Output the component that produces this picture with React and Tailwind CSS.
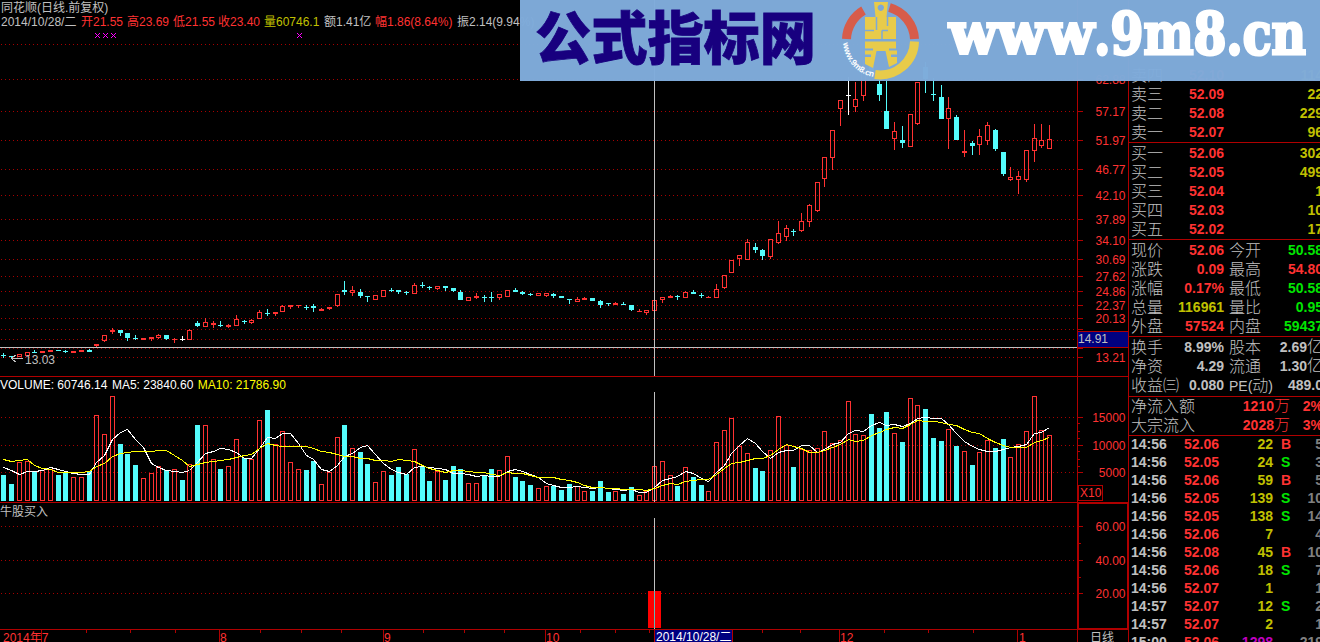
const RED = '#ff3232';
const CYAN = '#54fcfc';
const LINE = '#b00000';
const GRAY = '#c0c0c0';
const FONT = '"Liberation Sans", "Noto Sans CJK SC", sans-serif';

// kind, body top, body bottom, high, low
const candles = [
    ['c', 355, 356, 353, 358], ['c', 356, 357, 356, 358], ['r', 354, 357], ['r', 352, 356], ['c', 352, 353, 350, 353],
    ['r', 351, 353], ['r', 350, 352], ['c', 350, 351], ['c', 351, 352, 350, 353], ['r', 351, 353],
    ['r', 350, 352], ['c', 350, 352, 349, 352], ['r', 344, 346, 344, 347], ['r', 335, 341, 335, 342], ['r', 330, 332, 328, 334],
    ['c', 330, 333, 330, 336], ['c', 333, 338, 333, 341], ['c', 338, 339, 335, 340], ['r', 338, 340], ['r', 337, 339, 337, 341],
    ['r', 335, 338, 334, 339], ['c', 335, 339, 335, 340], ['r', 339, 340, 338, 343], ['w', 339, 340, 336, 341], ['r', 330, 340, 329, 340],
    ['c', 323, 326, 321, 327], ['r', 322, 327, 318, 327], ['r', 323, 325, 321, 328], ['c', 325, 326, 321, 327], ['r', 325, 327, 324, 328],
    ['r', 319, 326, 315, 326], ['c', 321, 322, 320, 324], ['r', 320, 323, 319, 324], ['r', 312, 319, 310, 319], ['c', 313, 314, 309, 316],
    ['r', 312, 314, 312, 316], ['r', 306, 312, 305, 312], ['r', 305, 307, 305, 309], ['r', 305, 306, 305, 308], ['c', 307, 308, 305, 310],
    ['c', 306, 308, 304, 312], ['r', 309, 311, 308, 311], ['r', 307, 309, 307, 310], ['r', 294, 306, 294, 307], ['c', 290, 292, 281, 295],
    ['r', 290, 293, 286, 296], ['c', 292, 296, 289, 298], ['c', 296, 297, 296, 302], ['r', 295, 300], ['r', 290, 297],
    ['c', 290, 291, 288, 292], ['c', 290, 292, 290, 294], ['c', 292, 293, 291, 295], ['r', 285, 294, 283, 294], ['c', 285, 286, 282, 288],
    ['c', 287, 288, 286, 290], ['r', 286, 289, 286, 290], ['c', 286, 288, 286, 291], ['c', 288, 291, 288, 292], ['c', 292, 300, 290, 300],
    ['r', 297, 301], ['r', 296, 298, 293, 299], ['c', 297, 298, 295, 302], ['c', 297, 298, 292, 302], ['r', 294, 298, 294, 300],
    ['r', 290, 297], ['c', 290, 292, 288, 292], ['c', 292, 294, 291, 295], ['c', 294, 295, 293, 296], ['r', 293, 296],
    ['r', 293, 296, 293, 297], ['c', 294, 296, 293, 298], ['c', 296, 298], ['c', 299, 300, 299, 304], ['r', 299, 302, 297, 302],
    ['r', 298, 300, 297, 300], ['c', 298, 301], ['c', 301, 305, 300, 308], ['c', 303, 304, 303, 306], ['r', 303, 305, 302, 305],
    ['c', 304, 305, 302, 305], ['c', 305, 310, 305, 311], ['r', 311, 312, 309, 312], ['r', 310, 313, 310, 315], ['r', 300, 311],
    ['r', 297, 300, 297, 303], ['r', 296, 298, 295, 298], ['c', 296, 297, 295, 300], ['r', 292, 298, 291, 298], ['c', 292, 294, 290, 294],
    ['c', 295, 296, 293, 298], ['r', 297, 298, 296, 298], ['r', 289, 298, 284, 298], ['r', 275, 288, 275, 289], ['r', 260, 273],
    ['r', 255, 259, 255, 266], ['r', 242, 260, 239, 260], ['c', 247, 250, 243, 253], ['c', 250, 256, 249, 260], ['r', 239, 257, 239, 259],
    ['r', 233, 243, 221, 244], ['r', 228, 237, 225, 241], ['c', 231, 232, 229, 236], ['r', 221, 231, 213, 232], ['r', 205, 222, 204, 227],
    ['r', 182, 211, 182, 212], ['r', 157, 179, 157, 187], ['r', 130, 158, 130, 170], ['r', 100, 109, 100, 126], ['w', 95, 96, 77, 115],
    ['r', 99, 107, 82, 112], ['r', 70, 96, 60, 101], ['c', 58, 74, 50, 78], ['c', 84, 95, 74, 101], ['c', 111, 129, 76, 129],
    ['r', 131, 139, 122, 150], ['c', 140, 143, 126, 148], ['r', 114, 147], ['r', 82, 124, 82, 125], ['c', 67, 79, 62, 93],
    ['c', 94, 95, 78, 101], ['c', 97, 119, 85, 119], ['r', 108, 119, 97, 149], ['c', 117, 140, 115, 140], ['r', 151, 153, 130, 157],
    ['c', 143, 146, 141, 155], ['r', 136, 145, 129, 155], ['r', 125, 141, 122, 145], ['c', 130, 149, 129, 151], ['c', 152, 174, 152, 176],
    ['r', 177, 180, 167, 181], ['r', 176, 180, 171, 194], ['r', 150, 180, 150, 182], ['r', 138, 151, 124, 162], ['r', 140, 146, 124, 148],
    ['r', 139, 149, 125, 149],
];

const volumeTops = [
    475, 484, 462, 461, 471, 470, 469, 475, 472, 477, 477, 471, 415, 434, 396, 444, 454, 465, 478, 473,
    466, 470, 469, 480, 464, 425, 425, 459, 469, 466, 439, 458, 459, 420, 410, 444, 431, 462, 469, 470,
    461, 484, 472, 437, 425, 448, 452, 464, 482, 471, 475, 467, 474, 449, 466, 481, 471, 480, 466, 469,
    483, 483, 475, 469, 470, 456, 477, 481, 485, 488, 486, 486, 490, 484, 486, 491, 491, 481, 492, 491,
    494, 487, 495, 491, 466, 461, 475, 486, 467, 477, 485, 491, 442, 430, 418, 446, 453, 468, 471, 450,
    416, 445, 467, 449, 450, 448, 431, 443, 440, 401, 434, 435, 414, 428, 412, 433, 442, 398, 405, 409,
    438, 441, 429, 446, 451, 465, 452, 440, 448, 439, 457, 444, 431, 396, 430, 435,
];

const barX = (i) => Math.ceil(2.97 + 7.745 * i);

// a doji takes its volume colour from the previous close
const risingDojis = [109];
const isUp = (i) => candles[i][0] === 'r' || risingDojis.includes(i);

// the first points come before a full averaging window is on screen
const average = (size, lead) =>
    volumeTops
        .map((_, i) => {
            const part = volumeTops.slice(Math.max(0, i - size + 1), i + 1);
            const y = i < lead.length ? lead[i] : part.reduce((a, b) => a + b, 0) / size;
            return `${barX(i) + 0.5},${Math.round(y) + 0.5}`;
        })
        .join(' ');

const ma5 = average(5, [467, 470, 474, 471]);
const ma10 = average(10, [459, 461, 460, 459, 465, 468, 469, 472, 472]);

const priceLevels = [
    [44], [79, '62.88'], [111, '57.17'], [140, '51.97'], [169, '46.77'], [195, '42.10'], [219, '37.89'], [240, '34.10'],
    [259, '30.69'], [276, '27.62'], [291, '24.86'], [305, '22.37'], [318, '20.13'], [329], [339], [348], [357, '13.21'],
];

function Candle({ x, data }) {
    const [kind, top, bottom, high = top, low = bottom] = data;
    const color = kind === 'r' ? RED : kind === 'c' ? CYAN : '#ffffff';
    const hollow = kind === 'r' && bottom - top > 2;
    return (
        <g fill={color}>
            {high < top && <rect x={x} y={high} width="1" height={top - high} />}
            {low > bottom && <rect x={x} y={bottom} width="1" height={low - bottom} />}
            {hollow ? (
                <rect x={x - 1.5} y={top + 0.5} width="4" height={bottom - top - 1} fill="none" stroke={color} />
            ) : (
                <rect x={x - 2} y={top} width="5" height={bottom - top} />
            )}
        </g>
    );
}

function GridLines({ ys }) {
    return ys.map((y) => (
        <line key={y} x1="1" x2="1076" y1={y + 0.5} y2={y + 0.5} stroke="#a80000" strokeDasharray="1 3" />
    ));
}

function Ticks({ ys, size }) {
    return ys.map((y) => <rect key={y} x="1078" y={y} width={size} height="1" fill={LINE} />);
}

function AxisLabel({ y, children }) {
    return (
        <text x="1125.5" y={y + 5} textAnchor="end" fill={RED}>
            {children}
        </text>
    );
}

function Panel({ top, height, children }) {
    return (
        <svg
            width="1129"
            height={height}
            viewBox={`0 ${top} 1129 ${height}`}
            className="block shrink-0"
            shapeRendering="crispEdges"
            fontFamily={FONT}
            fontSize="12"
        >
            {children}
        </svg>
    );
}

function PricePanel() {
    return (
        <Panel top={0} height={377}>
            <GridLines ys={priceLevels.map(([y]) => y)} />
            <Ticks ys={priceLevels.map(([y]) => y)} size="5" />
            {priceLevels.map(([y, label]) => label && <AxisLabel key={y} y={y}>{label}</AxisLabel>)}
            {candles.map((c, i) => <Candle key={i} x={barX(i)} data={c} />)}
            {[97, 105, 113, 299].map((x) => (
                <path
                    key={x}
                    d={`M${x - 2} 33h1v1h1v1h1v-1h1v-1h1v1h-1v1h-1v1h1v1h1v1h-1v-1h-1v-1h-1v1h-1v1h-1v-1h1v-1h1v-1h-1v-1h-1z`}
                    fill="#ff00ff"
                />
            ))}
            <path d="M23 358.5H11.500M15.500 355L11.500 358.500L15.500 362" fill="none" stroke={GRAY} />
            <text x="25" y="364" fill={GRAY}>13.03</text>
            <rect x="0" y="347" width="1077" height="1" fill={GRAY} />
            <rect x="654" y="0" width="1" height="376" fill={GRAY} />
            <rect x="1077" y="0" width="1" height="377" fill={LINE} />
            <rect x="1128" y="0" width="1" height="377" fill={LINE} />
            <rect x="1078" y="331" width="50" height="17" fill={LINE} />
            <rect x="1078" y="332" width="50" height="15" fill="#000080" />
            <text x="1078" y="343" fill={GRAY}>14.91</text>
            <rect x="0" y="376" width="1129" height="1" fill={LINE} />
        </Panel>
    );
}

function VolumePanel() {
    return (
        <Panel top={377} height={126}>
            <GridLines ys={[417, 445, 472]} />
            <Ticks ys={[417, 445, 472]} size="5" />
            <Ticks ys={[423, 431, 438, 451, 459, 466]} size="2" />
            <AxisLabel y={417}>15000</AxisLabel>
            <AxisLabel y={445}>10000</AxisLabel>
            <AxisLabel y={472}>5000</AxisLabel>
            {volumeTops.map((top, i) =>
                isUp(i) ? (
                    <rect key={i} x={barX(i) - 1.5} y={top + 0.5} width="4" height={500 - top} fill="none" stroke={RED} />
                ) : (
                    <rect key={i} x={barX(i) - 2} y={top} width="5" height={501 - top} fill={CYAN} />
                )
            )}
            <rect x="654" y="392" width="1" height="110" fill={GRAY} />
            <polyline points={ma5} fill="none" stroke="#ffffff" />
            <polyline points={ma10} fill="none" stroke="#ffff00" />
            <rect x="1077" y="377" width="1" height="126" fill={LINE} />
            <rect x="1128" y="377" width="1" height="126" fill={LINE} />
            <rect x="1078.5" y="485.5" width="24" height="15" fill="none" stroke={LINE} />
            <text x="1080" y="497" fill={RED}>X10</text>
            <rect x="0" y="502" width="1129" height="1" fill={LINE} />
        </Panel>
    );
}

function SignalPanel() {
    return (
        <Panel top={503} height={127}>
            <GridLines ys={[526, 560, 593]} />
            <Ticks ys={[526, 560, 593]} size="5" />
            <Ticks ys={[543, 577]} size="3" />
            <AxisLabel y={526}>60.00</AxisLabel>
            <AxisLabel y={560}>40.00</AxisLabel>
            <AxisLabel y={593}>20.00</AxisLabel>
            <rect x="648" y="591" width="13" height="37" fill="#ff0000" />
            <rect x="654" y="518" width="1" height="111" fill={GRAY} />
            <rect x="654" y="591" width="1" height="37" fill="#60b8b8" />
            <rect x="0" y="629" width="1129" height="1" fill={LINE} />
            <rect x="1078" y="503" width="50" height="126" fill="none" stroke={LINE} strokeWidth="2" />
        </Panel>
    );
}

const months = [
    [41, '', 0],
    [219, '8', 220],
    [383, '9', 384],
    [545, '10', 546],
    [839, '12', 840],
    [1017, '1', 1019],
];

function DateAxis() {
    return (
        <Panel top={630} height={12}>
            {[86, 130, 175, 260, 301, 341, 423, 464, 504, 580, 615, 649, 762, 800, 884, 928, 973].map((x) => (
                <rect key={x} x={x} y="630" width="1" height="3" fill={LINE} />
            ))}
            {months.map(([x, label, tx]) => (
                <g key={x}>
                    <rect x={x} y="630" width="1" height="12" fill={LINE} />
                    <text x={tx} y="642" fill={RED}>{label}</text>
                </g>
            ))}
            <text x="3" y="642" fill={RED}>2014年7</text>
            <rect x="654" y="630" width="79" height="12" fill={LINE} />
            <rect x="655" y="630" width="77" height="12" fill="#000080" />
            <text x="656" y="641" fill="#ffffff">2014/10/28/二</text>
            <rect x="1077" y="630" width="1" height="12" fill={LINE} />
            <rect x="1128" y="630" width="1" height="12" fill={LINE} />
            <text x="1090" y="642" fill={GRAY}>日线</text>
        </Panel>
    );
}

function Legend() {
    return (
        <div className="absolute left-0 top-0 pt-px text-[12px] leading-[14px] whitespace-nowrap text-[#c0c0c0]">
            <div className="pl-[1px]">同花顺(日线.前复权)</div>
            <div className="flex pl-[1px] text-[#ff3232]">
                <span className="w-[80px] text-[#c0c0c0]">2014/10/28/二</span>
                <span className="w-[46px]">开21.55</span>
                <span className="w-[46px]">高23.69</span>
                <span className="w-[45px]">低21.55</span>
                <span className="w-[46px]">收23.40</span>
                <span className="w-[60px] text-[#c0c000]">量60746.1</span>
                <span className="w-[51px] text-[#c0c0c0]">额1.41亿</span>
                <span className="w-[82px]">幅1.86(8.64%)</span>
                <span className="text-[#c0c0c0]">振2.14(9.94%)</span>
            </div>
        </div>
    );
}

const R = 'text-[#ff3232]';
const G = 'text-[#00e600]';
const Y = 'text-[#c0c000]';
const W = 'text-[#c0c0c0]';

const asks = [
    ['卖四', '52.10', '114'],
    ['卖三', '52.09', '22'],
    ['卖二', '52.08', '229'],
    ['卖一', '52.07', '96'],
];
const bids = [
    ['买一', '52.06', '302'],
    ['买二', '52.05', '499'],
    ['买三', '52.04', '1'],
    ['买四', '52.03', '10'],
    ['买五', '52.02', '17'],
];
const stats = [
    ['现价', '52.06', R, '今开', '50.58', G],
    ['涨跌', '0.09', R, '最高', '54.80', R],
    ['涨幅', '0.17%', R, '最低', '50.58', G],
    ['总量', '116961', Y, '量比', '0.95', G],
    ['外盘', '57524', R, '内盘', '59437', G],
];
const trades = [
    ['14:56', '52.06', '22', 'B', '5'],
    ['14:56', '52.05', '24', 'S', '3'],
    ['14:56', '52.06', '59', 'B', '5'],
    ['14:56', '52.05', '139', 'S', '10'],
    ['14:56', '52.05', '138', 'S', '14'],
    ['14:56', '52.06', '7', '', '4'],
    ['14:56', '52.08', '45', 'B', '10'],
    ['14:56', '52.06', '18', 'S', '7'],
    ['14:56', '52.07', '1', '', '1'],
    ['14:57', '52.07', '12', 'S', '2'],
    ['14:57', '52.07', '2', '', '1'],
    ['15:00', '52.06', '1298', '', '219'],
];

function QuoteRow({ label, value, color, label2, value2, color2 }) {
    return (
        <div className="flex h-[19px] w-[194px] items-center pl-[2px] leading-[19px]">
            <span className="w-[44px] text-[16px] font-light">{label}</span>
            <span className={`w-[49px] text-right font-bold ${color}`}>{value}</span>
            <span className="ml-[5px] w-[32px] text-[16px] font-light">{label2}</span>
            <span className={`flex-1 text-right font-bold ${color2}`}>{value2}</span>
        </div>
    );
}

function Unit({ children }) {
    return <span className="text-[16px] leading-none font-light">{children}</span>;
}

function QuotePanel() {
    return (
        <aside className="w-[191px] overflow-hidden whitespace-nowrap text-[14px] text-[#c0c0c0]">
            <div className="flex h-[143px] flex-col justify-end border-b border-[#b00000]">
                {asks.map(([label, price, vol]) => (
                    <QuoteRow key={label} label={label} value={price} color={R} value2={vol} color2={Y} />
                ))}
            </div>
            <div className="h-[97px] border-b border-[#b00000] pt-px">
                {bids.map(([label, price, vol]) => (
                    <QuoteRow key={label} label={label} value={price} color={R} value2={vol} color2={Y} />
                ))}
            </div>
            <div className="h-[97px] border-b border-[#b00000] pt-px">
                {stats.map(([label, value, color, label2, value2, color2]) => (
                    <QuoteRow key={label} label={label} value={value} color={color} label2={label2} value2={value2} color2={color2} />
                ))}
            </div>
            <div className="h-[60px] border-b border-[#b00000] pt-px">
                <QuoteRow label="换手" value="8.99%" color={W} label2="股本" value2={<>2.69<Unit>亿</Unit></>} color2={W} />
                <QuoteRow label="净资" value="4.29" color={W} label2="流通" value2={<>1.30<Unit>亿</Unit></>} color2={W} />
                <QuoteRow
                    label="收益㈢"
                    value="0.080"
                    color={W}
                    label2={<><b className="text-[14px]">PE(</b>动<b className="text-[14px]">)</b></>}
                    value2="489.0"
                    color2={W}
                />
            </div>
            <div className="h-[39px] border-b border-[#b00000]">
                {[['净流入额', '1210', '2%'], ['大宗流入', '2028', '3%']].map(([label, value, share]) => (
                    <div key={label} className="flex h-[19px] w-[194px] items-center pl-[2px] font-bold text-[#ff3232]">
                        <span className="w-[64px] text-[16px] leading-none font-light text-[#c0c0c0]">{label}</span>
                        <span className="w-[95px] text-right leading-[19px]">{value}<Unit>万</Unit></span>
                        <span className="flex-1 text-right">{share}</span>
                    </div>
                ))}
            </div>
            <div className="-mt-px font-bold">
                {trades.map(([time, price, vol, side, count], i) => (
                    <div key={i} className="flex h-[18px] w-[194px] items-center pl-[2px] leading-[18px]">
                        <span className="w-[53px]">{time}</span>
                        <span className="w-[37px] text-[#ff3232]">{price}</span>
                        <span className={`w-[52px] text-right ${vol === '1298' ? 'text-[#c000c0]' : 'text-[#c0c000]'}`}>{vol}</span>
                        <span className={`w-[24px] pl-[8px] ${side === 'B' ? R : G}`}>{side}</span>
                        <span className="flex-1 text-right text-[#808080]">{count}</span>
                    </div>
                ))}
            </div>
        </aside>
    );
}

function Banner() {
    return (
        <div className="absolute left-[520px] top-0 h-[81px] w-[800px] bg-[#7fabda]/98">
            <svg width="800" height="81" viewBox="520 0 800 81" className="block">
                <text
                    x="535"
                    y="59"
                    fontFamily='"Noto Sans CJK SC", sans-serif'
                    fontSize="57"
                    fontWeight="900"
                    fill="#18007f"
                    stroke="#18007f"
                    strokeWidth="0.8"
                    textLength="281"
                    lengthAdjust="spacingAndGlyphs"
                >
                    公式指标网
                </text>
                <g fill="none" strokeWidth="9">
                    <path d="M846.5 39A34.500 34.500 0 0 1 863.500 10.500" stroke="#d75c4a" />
                    <path d="M889.500 7.500A34.500 34.500 0 0 1 914.500 39" stroke="#d75c4a" />
                    <path d="M914.500 41.500A34.500 34.500 0 0 1 875 74.500" stroke="#e8cb4a" />
                </g>
                <path
                    fill="#e8cb4a"
                    fillRule="evenodd"
                    d="M874 2h14l-1.500 15H896v22H865V17h10.500zM880.800 4.500a3.200 3.200 0 1 0 .01 0zM865 41.500h31v7h-7v2h8v4h-6v2.500h6v6l-8 4-3.500-16h-9L873 68l-8-4v-7h6v-2.500h-6v-4h8v-2h-8z"
                />
                <path d="M865 30.500h9M876.500 17v13M882 30.500v9M882 30.500h6M887.500 17v9" stroke="#7da9d8" strokeWidth="1.500" fill="none" />
                <path id="ring" d="M843 43A37.500 37.500 0 0 0 877 77.500" fill="none" />
                <text fontFamily='"Liberation Sans", sans-serif' fontSize="8.5" fontWeight="700" fill="#ffffff">
                    <textPath href="#ring" textLength="49" lengthAdjust="spacingAndGlyphs">www.9m8.cn</textPath>
                </text>
                <text
                    y="54"
                    fontFamily='"DejaVu Serif", serif'
                    fontSize="58"
                    fontWeight="700"
                    fill="#ffffff"
                    stroke="#ffffff"
                    strokeWidth="3"
                >
                    <tspan x="949" textLength="145" lengthAdjust="spacingAndGlyphs">www</tspan>
                    <tspan x="1094" textLength="212" lengthAdjust="spacingAndGlyphs">.9m8.cn</tspan>
                </text>
            </svg>
        </div>
    );
}

export default function App() {
    return (
        <div className="relative flex h-[642px] w-[1320px] overflow-hidden bg-black font-['Liberation_Sans','Noto_Sans_CJK_SC',sans-serif]">
            <main className="relative flex w-[1129px] shrink-0 flex-col">
                <PricePanel />
                <VolumePanel />
                <SignalPanel />
                <DateAxis />
                <Legend />
                <div className="absolute left-0 top-[378px] flex gap-[4.5px] text-[12px] leading-[14px] whitespace-nowrap text-white">
                    <span>VOLUME: 60746.14</span>
                    <span>MA5: 23840.60</span>
                    <span className="text-[#ffff00]">MA10: 21786.90</span>
                </div>
                <div className="absolute left-0 top-[505px] text-[12px] leading-[14px] text-[#c0c0c0]">牛股买入</div>
            </main>
            <QuotePanel />
            <Banner />
        </div>
    );
}
